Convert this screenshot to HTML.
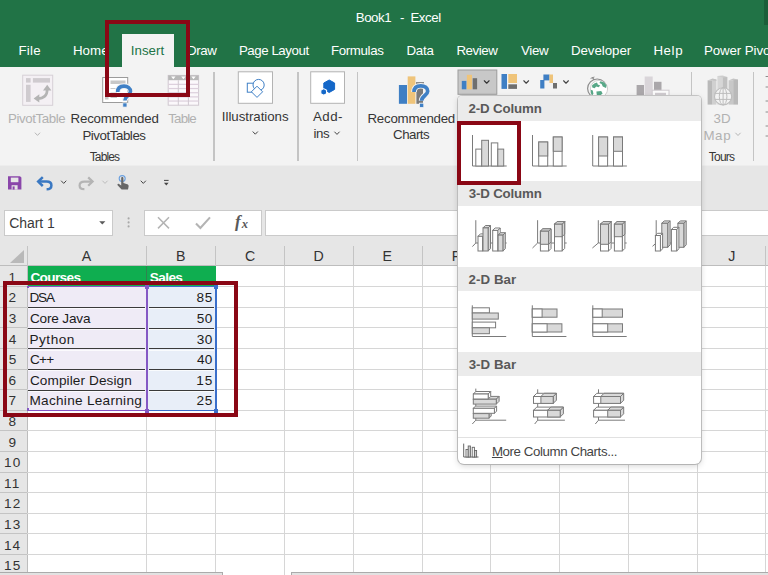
<!DOCTYPE html>
<html><head><meta charset="utf-8"><title>Book1 - Excel</title>
<style>
html,body{margin:0;padding:0;}
body{width:768px;height:575px;overflow:hidden;position:relative;background:#fff;font-family:"Liberation Sans", sans-serif;}
body div,body span.t,body svg{position:absolute;}
.t{white-space:nowrap;display:block;}
</style></head><body>
<div style="left:0px;top:0px;width:768px;height:67px;background:#217346;"></div>
<div style="left:764px;top:0px;width:4px;height:25px;background:#1b5e39;"></div>
<div style="left:0px;top:67px;width:768px;height:98.4px;background:#f3f3f3;"></div>
<div style="left:0px;top:165.4px;width:768px;height:1px;background:#ededed;"></div>
<div style="left:0px;top:166.2px;width:768px;height:78px;background:#e6e6e6;"></div>
<div style="left:122px;top:34px;width:52px;height:33px;background:#f3f3f3;"></div>
<span id="t0" class="t" style="left:355.71px;top:11.04px;font-size:13.3px;line-height:13.3px;color:#fff;font-weight:400;letter-spacing:-0.443px;">Book1</span>
<span id="t1" class="t" style="left:399.94px;top:11.04px;font-size:13.3px;line-height:13.3px;color:#fff;font-weight:400;letter-spacing:0.000px;">-</span>
<span id="t2" class="t" style="left:410.41px;top:11.04px;font-size:13.3px;line-height:13.3px;color:#fff;font-weight:400;letter-spacing:-0.435px;">Excel</span>
<span id="t3" class="t" style="left:18.41px;top:44.24px;font-size:13.3px;line-height:13.3px;color:#fff;font-weight:400;letter-spacing:0.250px;">File</span>
<span id="t4" class="t" style="left:72.91px;top:44.24px;font-size:13.3px;line-height:13.3px;color:#fff;font-weight:400;letter-spacing:0.068px;">Home</span>
<span id="t5" class="t" style="left:130.77px;top:44.24px;font-size:13.3px;line-height:13.3px;color:#217346;font-weight:400;letter-spacing:0.012px;">Insert</span>
<span id="t6" class="t" style="left:186.91px;top:44.24px;font-size:13.3px;line-height:13.3px;color:#fff;font-weight:400;letter-spacing:-0.326px;">Draw</span>
<span id="t7" class="t" style="left:238.91px;top:44.24px;font-size:13.3px;line-height:13.3px;color:#fff;font-weight:400;letter-spacing:-0.450px;">Page Layout</span>
<span id="t8" class="t" style="left:330.91px;top:44.24px;font-size:13.3px;line-height:13.3px;color:#fff;font-weight:400;letter-spacing:-0.351px;">Formulas</span>
<span id="t9" class="t" style="left:406.41px;top:44.24px;font-size:13.3px;line-height:13.3px;color:#fff;font-weight:400;letter-spacing:-0.168px;">Data</span>
<span id="t10" class="t" style="left:456.41px;top:44.24px;font-size:13.3px;line-height:13.3px;color:#fff;font-weight:400;letter-spacing:-0.410px;">Review</span>
<span id="t11" class="t" style="left:520.94px;top:44.24px;font-size:13.3px;line-height:13.3px;color:#fff;font-weight:400;letter-spacing:-0.267px;">View</span>
<span id="t12" class="t" style="left:570.91px;top:44.24px;font-size:13.3px;line-height:13.3px;color:#fff;font-weight:400;letter-spacing:-0.039px;">Developer</span>
<span id="t13" class="t" style="left:653.41px;top:44.24px;font-size:13.3px;line-height:13.3px;color:#fff;font-weight:400;letter-spacing:0.599px;">Help</span>
<span id="t14" class="t" style="left:703.91px;top:44.24px;font-size:13.3px;line-height:13.3px;color:#fff;font-weight:400;letter-spacing:-0.077px;">Power Pivot</span>
<span id="t15" class="t" style="left:7.91px;top:112.04px;font-size:13.3px;line-height:13.3px;color:#b1b1b1;font-weight:400;letter-spacing:-0.395px;">PivotTable</span>
<span id="t16" class="t" style="left:70.51px;top:112.04px;font-size:13.3px;line-height:13.3px;color:#363636;font-weight:400;letter-spacing:-0.184px;">Recommended</span>
<span id="t17" class="t" style="left:82.41px;top:128.94px;font-size:13.3px;line-height:13.3px;color:#363636;font-weight:400;letter-spacing:-0.442px;">PivotTables</span>
<span id="t18" class="t" style="left:168.30px;top:112.04px;font-size:13.3px;line-height:13.3px;color:#b1b1b1;font-weight:400;letter-spacing:-0.845px;">Table</span>
<span id="t19" class="t" style="left:89.73px;top:151.44px;font-size:12px;line-height:12px;color:#363636;font-weight:400;letter-spacing:-0.863px;">Tables</span>
<span id="t20" class="t" style="left:221.87px;top:109.54px;font-size:13.3px;line-height:13.3px;color:#363636;font-weight:400;letter-spacing:-0.047px;">Illustrations</span>
<span id="t21" class="t" style="left:313.07px;top:109.54px;font-size:13.3px;line-height:13.3px;color:#363636;font-weight:400;letter-spacing:0.408px;">Add-</span>
<span id="t22" class="t" style="left:313.61px;top:126.74px;font-size:13.3px;line-height:13.3px;color:#363636;font-weight:400;letter-spacing:-0.466px;">ins</span>
<span id="t23" class="t" style="left:367.51px;top:111.54px;font-size:13.3px;line-height:13.3px;color:#363636;font-weight:400;letter-spacing:-0.244px;">Recommended</span>
<span id="t24" class="t" style="left:393.12px;top:128.34px;font-size:13.3px;line-height:13.3px;color:#363636;font-weight:400;letter-spacing:-0.523px;">Charts</span>
<span id="t25" class="t" style="left:713.49px;top:112.04px;font-size:13.3px;line-height:13.3px;color:#b1b1b1;font-weight:400;letter-spacing:0.141px;">3D</span>
<span id="t26" class="t" style="left:703.41px;top:128.94px;font-size:13.3px;line-height:13.3px;color:#b1b1b1;font-weight:400;letter-spacing:0.638px;">Map</span>
<span id="t27" class="t" style="left:708.73px;top:151.44px;font-size:12px;line-height:12px;color:#363636;font-weight:400;letter-spacing:-0.743px;">Tours</span>
<div style="left:213.20000000000002px;top:71.5px;width:1.4px;height:89.5px;background:#c4c4c4;"></div>
<div style="left:297.2px;top:71.5px;width:1.4px;height:89.5px;background:#c4c4c4;"></div>
<div style="left:356.8px;top:71.5px;width:1.4px;height:89.5px;background:#c4c4c4;"></div>
<div style="left:691.0px;top:71.5px;width:1.4px;height:89.5px;background:#c4c4c4;"></div>
<div style="left:752.9px;top:71.5px;width:1.4px;height:89.5px;background:#c4c4c4;"></div>
<div style="left:3.5px;top:209.5px;width:109px;height:26px;background:#fff;box-sizing:border-box;border:1px solid #cacaca;"></div>
<span id="t28" class="t" style="left:9.29px;top:216.45px;font-size:14px;line-height:14px;color:#3a3a3a;font-weight:400;letter-spacing:-0.086px;">Chart 1</span>
<div style="left:144px;top:209.5px;width:118px;height:26px;background:#fff;box-sizing:border-box;border:1px solid #cacaca;"></div>
<span id="t29" class="t" style="left:235.06px;top:212.71px;font-size:17px;line-height:17px;color:#595959;font-weight:700;letter-spacing:0.000px;font-family:'Liberation Serif', serif;"><i>f</i></span>
<span id="t30" class="t" style="left:241.80px;top:217.52px;font-size:12.5px;line-height:12.5px;color:#595959;font-weight:700;letter-spacing:0.000px;font-family:'Liberation Serif', serif;"><i>x</i></span>
<div style="left:264.5px;top:209.5px;width:510px;height:26px;background:#fff;box-sizing:border-box;border:1px solid #cacaca;"></div>
<svg style="left:0;top:0" width="768" height="575" viewBox="0 0 768 575">
<rect x="22.70" y="75.20" width="30.00" height="30.10" fill="#f4f0f4" stroke="#d6d0d6" stroke-width="1" />
<rect x="26.00" y="78.10" width="4.60" height="4.50" fill="#cfcbcf"  />
<rect x="32.90" y="78.10" width="17.10" height="4.50" fill="#cfcbcf"  />
<rect x="26.00" y="84.75" width="4.60" height="17.15" fill="#cfcbcf"  />
<path d="M37.5,98.5 C44,98.5 47.2,95 47.2,89.5" fill="none" stroke="#b4b4b4" stroke-width="2.6" />
<polygon points="33.60,98.40 39.30,94.20 39.30,102.40" fill="#b4b4b4" stroke="none" stroke-linejoin="round" />
<polygon points="47.20,84.80 43.00,90.60 51.40,90.60" fill="#b4b4b4" stroke="none" stroke-linejoin="round" />
<path d="M35.20,133.00 L37.50,135.40 L39.80,133.00" fill="none" stroke="#b5b5b5" stroke-width="1" stroke-linecap="round" stroke-linejoin="round"/>
<rect x="102.70" y="77.50" width="25.00" height="25.00" fill="#fff" stroke="#9b9b9b" stroke-width="1" />
<rect x="110.50" y="80.50" width="15.00" height="3.50" fill="#c8c8c8"  />
<rect x="105.00" y="86.50" width="3.50" height="13.00" fill="#c8c8c8"  />
<line x1="110.50" y1="88.50" x2="116.00" y2="88.50" stroke="#c8c8c8" stroke-width="1" />
<line x1="110.50" y1="93.00" x2="117.00" y2="93.00" stroke="#c8c8c8" stroke-width="1" />
<line x1="110.50" y1="97.50" x2="117.00" y2="97.50" stroke="#c8c8c8" stroke-width="1" />
<path d="M117.7,92 C117.7,87.4 120.8,86.1 124,86.1 C127.8,86.1 130.5,88.2 130.5,91.4 C130.5,95 124.9,96 124.9,100.6" fill="none" stroke="#f3f3f3" stroke-width="5.8" />
<path d="M117.7,92 C117.7,87.4 120.8,86.1 124,86.1 C127.8,86.1 130.5,88.2 130.5,91.4 C130.5,95 124.9,96 124.9,100.6" fill="none" stroke="#3f80c6" stroke-width="3.6" />
<rect x="122.80" y="102.90" width="4.20" height="4.20" fill="#3f80c6" stroke="#f3f3f3" stroke-width="0.8" />
<rect x="168.20" y="75.40" width="30.40" height="29.80" fill="#fbf8fb" stroke="#d0c8d0" stroke-width="1" />
<rect x="168.20" y="75.40" width="30.40" height="4.80" fill="#b8b8b8"  />
<polygon points="171.10,76.60 175.50,76.60 173.30,79.20" fill="#fff" stroke="none" stroke-linejoin="round" />
<polygon points="181.20,76.60 185.60,76.60 183.40,79.20" fill="#fff" stroke="none" stroke-linejoin="round" />
<polygon points="191.30,76.60 195.70,76.60 193.50,79.20" fill="#fff" stroke="none" stroke-linejoin="round" />
<line x1="168.20" y1="84.37" x2="198.60" y2="84.37" stroke="#dccfdc" stroke-width="1.2" />
<line x1="168.20" y1="88.54" x2="198.60" y2="88.54" stroke="#dccfdc" stroke-width="1.2" />
<line x1="168.20" y1="92.71" x2="198.60" y2="92.71" stroke="#dccfdc" stroke-width="1.2" />
<line x1="168.20" y1="96.88" x2="198.60" y2="96.88" stroke="#dccfdc" stroke-width="1.2" />
<line x1="168.20" y1="101.05" x2="198.60" y2="101.05" stroke="#dccfdc" stroke-width="1.2" />
<line x1="178.30" y1="80.20" x2="178.30" y2="105.20" stroke="#d0c8d0" stroke-width="1" />
<line x1="188.40" y1="80.20" x2="188.40" y2="105.20" stroke="#d0c8d0" stroke-width="1" />
<rect x="238.30" y="71.80" width="34.20" height="31.50" fill="#fff" stroke="#b3b3b3" stroke-width="1" />
<rect x="247.30" y="83.20" width="9.10" height="9.00" fill="none" stroke="#3f80c6" stroke-width="1" />
<circle cx="258.6" cy="85" r="5.6" fill="#fff" stroke="#3f80c6" stroke-width="1"/>
<polygon points="257.00,86.20 262.60,91.80 257.00,97.40 251.40,91.80" fill="#fff" stroke="#3f80c6" stroke-width="1" stroke-linejoin="round" />
<path d="M253.00,131.80 L255.30,134.20 L257.60,131.80" fill="none" stroke="#444" stroke-width="1" stroke-linecap="round" stroke-linejoin="round"/>
<rect x="310.70" y="71.80" width="33.80" height="31.50" fill="#fff" stroke="#b3b3b3" stroke-width="1" />
<polygon points="329.20,80.00 334.60,83.00 334.60,89.40 329.20,92.50 323.80,89.40 323.80,83.00" fill="#1467c8" stroke="#1467c8" stroke-width="1" stroke-linejoin="round" />
<polygon points="323.70,88.60 326.60,90.30 326.60,93.60 323.70,95.30 320.80,93.60 320.80,90.30" fill="#1467c8" stroke="#fff" stroke-width="1.1" stroke-linejoin="round" />
<path d="M334.70,132.00 L337.00,134.40 L339.30,132.00" fill="none" stroke="#444" stroke-width="1" stroke-linecap="round" stroke-linejoin="round"/>
<rect x="398.90" y="85.00" width="8.10" height="18.80" fill="#3f7fc4"  />
<rect x="407.70" y="76.40" width="7.70" height="27.40" fill="#efc47a"  />
<rect x="416.00" y="82.00" width="8.00" height="2.00" fill="#8a8a8a"  />
<rect x="416.40" y="86.00" width="6.60" height="17.80" fill="#7a7a7a"  />
<path d="M414,92 C414,87.2 417.4,85.8 420.8,85.8 C424.8,85.8 427.7,88 427.7,91.3 C427.7,95.2 421.6,96 421.6,100.8" fill="none" stroke="#f3f3f3" stroke-width="5.6" />
<path d="M414,92 C414,87.2 417.4,85.8 420.8,85.8 C424.8,85.8 427.7,88 427.7,91.3 C427.7,95.2 421.6,96 421.6,100.8" fill="none" stroke="#3f80c6" stroke-width="3.7" />
<rect x="419.50" y="103.20" width="4.30" height="4.30" fill="#3f80c6" stroke="#f3f3f3" stroke-width="0.8" />
<rect x="458.00" y="70.00" width="38.80" height="24.30" fill="#c8c8c8" stroke="#9c9c9c" stroke-width="1" />
<rect x="461.80" y="80.90" width="4.60" height="8.40" fill="#3f7fc4"  />
<rect x="466.90" y="74.80" width="5.10" height="14.50" fill="#efc47a"  />
<rect x="472.70" y="78.20" width="4.40" height="11.10" fill="#6f6f6f"  />
<path d="M484.30,80.75 L486.70,83.25 L489.10,80.75" fill="none" stroke="#333" stroke-width="1.1" stroke-linecap="round" stroke-linejoin="round"/>
<rect x="501.50" y="74.00" width="5.50" height="14.90" fill="#3f7fc4"  />
<rect x="508.30" y="74.00" width="8.70" height="9.00" fill="#efc47a"  />
<rect x="508.30" y="84.30" width="8.70" height="4.60" fill="#6f6f6f"  />
<path d="M523.80,80.75 L526.20,83.25 L528.60,80.75" fill="none" stroke="#444" stroke-width="1.1" stroke-linecap="round" stroke-linejoin="round"/>
<rect x="540.20" y="80.00" width="4.20" height="8.50" fill="#3f7fc4"  />
<rect x="543.40" y="74.50" width="6.10" height="5.90" fill="#3f7fc4"  />
<rect x="549.50" y="74.50" width="3.50" height="8.50" fill="#efc47a"  />
<rect x="553.00" y="83.00" width="4.00" height="5.50" fill="#6f6f6f"  />
<path d="M563.60,80.75 L566.00,83.25 L568.40,80.75" fill="none" stroke="#444" stroke-width="1.1" stroke-linecap="round" stroke-linejoin="round"/>
<circle cx="597.2" cy="88.6" r="9.6" fill="none" stroke="#8c8c8c" stroke-width="1.2"/>
<circle cx="599" cy="89" r="8.6" fill="#fff" stroke="#b9b9b9" stroke-width=".6"/>
<path d="M594.3,83.6 L597,82.4 L597.8,84.6 L600.2,85.6 L598.6,87.2 L596.2,86.6 L594.6,88.2 L592.3,87.4 L592,85.4 Z" fill="#58a888"  />
<path d="M600.4,81.2 L604.4,82.4 L606.6,85.4 L606,88 L602.8,86.6 L601.6,84 L599.4,83 Z" fill="#58a888"  />
<path d="M590.8,89.8 L592.8,90.6 L593.4,93.8 L592,95.4 L590.9,93 Z" fill="#58a888"  />
<path d="M596.4,91.6 L601.2,91 L602.6,93.4 L600.2,95.6 L596.8,95 Z" fill="#58a888"  />
<line x1="592.20" y1="77.40" x2="594.40" y2="80.00" stroke="#8c8c8c" stroke-width="1.2" />
<line x1="590.60" y1="78.40" x2="594.40" y2="77.00" stroke="#8c8c8c" stroke-width="1" />
<rect x="636.60" y="85.00" width="7.40" height="11.00" fill="#aaa7aa"  />
<rect x="644.70" y="76.50" width="8.00" height="19.50" fill="#d9d5d9"  />
<rect x="654.00" y="81.80" width="7.50" height="14.20" fill="#aaa7aa"  />
<rect x="652.20" y="90.20" width="16.80" height="6.80" fill="#fbfbfb" stroke="#cfcbcf" stroke-width="1" />
<rect x="655.00" y="92.80" width="11.00" height="3.20" fill="#cfcbcf"  />
<rect x="707.60" y="80.40" width="5.00" height="24.20" fill="#b9b9b9"  />
<rect x="712.60" y="79.40" width="3.80" height="25.20" fill="#d0d0d0"  />
<rect x="717.40" y="76.00" width="5.20" height="28.60" fill="#d6d6d6"  />
<rect x="722.60" y="77.00" width="4.80" height="27.60" fill="#c0c0c0"  />
<rect x="728.60" y="80.40" width="4.60" height="24.20" fill="#c8c8c8"  />
<rect x="733.20" y="79.40" width="4.80" height="25.20" fill="#b9b9b9"  />
<polygon points="707.60,80.40 712.60,78.40 716.40,79.40 716.40,81.00 712.60,80.40" fill="#c4c4c4" stroke="none" stroke-linejoin="round" />
<polygon points="717.40,76.00 722.60,75.60 727.40,77.00 722.60,77.60" fill="#cdcdcd" stroke="none" stroke-linejoin="round" />
<polygon points="728.60,80.40 733.20,78.40 738.00,79.40 733.20,80.60" fill="#c4c4c4" stroke="none" stroke-linejoin="round" />
<circle cx="723.1" cy="96.4" r="8.6" fill="#f3f3f3" stroke="#bdbdbd" stroke-width="1.1"/>
<ellipse cx="723.1" cy="96.4" rx="3.8" ry="8.6" fill="none" stroke="#bdbdbd" stroke-width="1"/>
<line x1="714.80" y1="93.40" x2="731.40" y2="93.40" stroke="#bdbdbd" stroke-width="1" />
<line x1="714.80" y1="99.40" x2="731.40" y2="99.40" stroke="#bdbdbd" stroke-width="1" />
<line x1="723.10" y1="87.80" x2="723.10" y2="105.00" stroke="#bdbdbd" stroke-width="1" />
<path d="M735.70,133.10 L738.00,135.50 L740.30,133.10" fill="none" stroke="#b5b5b5" stroke-width="1" stroke-linecap="round" stroke-linejoin="round"/>
<line x1="765.60" y1="76.50" x2="768.00" y2="76.50" stroke="#8c8c8c" stroke-width="1" />
<line x1="765.60" y1="87.00" x2="768.00" y2="87.00" stroke="#8c8c8c" stroke-width="1" />
<line x1="765.60" y1="101.00" x2="768.00" y2="101.00" stroke="#8c8c8c" stroke-width="1" />
<line x1="765.60" y1="112.00" x2="768.00" y2="112.00" stroke="#8c8c8c" stroke-width="1" />
<line x1="765.60" y1="126.00" x2="768.00" y2="126.00" stroke="#8c8c8c" stroke-width="1" />
<line x1="765.60" y1="136.00" x2="768.00" y2="136.00" stroke="#8c8c8c" stroke-width="1" />
<path d="M8,176.2 H20 L21.4,177.6 V189.6 H8 Z" fill="#8a46aa"  />
<rect x="10.80" y="177.60" width="7.60" height="4.60" fill="#e6e6e6"  />
<rect x="11.60" y="185.20" width="6.00" height="4.40" fill="#e6e6e6"  />
<rect x="12.60" y="186.40" width="2.00" height="3.20" fill="#8a46aa"  />
<path d="M40,181.6 H46.6 C50,181.6 51.4,183.6 51.4,185.4 C51.4,187.6 49.8,189.2 46.6,189.2" fill="none" stroke="#3a78c2" stroke-width="2.5" stroke-linecap="butt"/>
<path d="M42.8,177.2 L38.2,181.6 L42.8,186" fill="none" stroke="#3a78c2" stroke-width="2.5" stroke-linejoin="miter"/>
<path d="M61.40,181.00 L63.70,183.40 L66.00,181.00" fill="none" stroke="#444" stroke-width="1" stroke-linecap="round" stroke-linejoin="round"/>
<path d="M91,181.6 H84.4 C81,181.6 79.6,183.6 79.6,185.4 C79.6,187.6 81.2,189.2 84.4,189.2" fill="none" stroke="#b4b4b4" stroke-width="2.2" />
<path d="M88.2,177.4 L92.6,181.6 L88.2,185.8" fill="none" stroke="#b4b4b4" stroke-width="2.2" />
<path d="M102.70,181.00 L105.00,183.40 L107.30,181.00" fill="none" stroke="#bdbdbd" stroke-width="1" stroke-linecap="round" stroke-linejoin="round"/>
<circle cx="122.2" cy="178.6" r="3" fill="none" stroke="#6aa0e0" stroke-width="1.1"/>
<path d="M121.2,178 C121.2,176.8 123.4,176.8 123.4,178 V183 L127.2,184.2 C128.4,184.6 128.8,185.4 128.6,186.6 L128,189.6 H121.6 L117.6,185.2 C117,184.4 118,183.4 119,184 L121.2,185.6 Z" fill="#666"  />
<path d="M141.00,181.00 L143.30,183.40 L145.60,181.00" fill="none" stroke="#444" stroke-width="1" stroke-linecap="round" stroke-linejoin="round"/>
<line x1="164.00" y1="180.40" x2="168.60" y2="180.40" stroke="#444" stroke-width="1" />
<polygon points="164.00,182.80 168.60,182.80 166.30,185.40" fill="#444" stroke="none" stroke-linejoin="round" />
<polygon points="99.20,221.20 105.40,221.20 102.30,224.60" fill="#5a5a5a" stroke="none" stroke-linejoin="round" />
<circle cx="128.6" cy="218.4" r="1.05" fill="#a8a8a8"/>
<circle cx="128.6" cy="222.4" r="1.05" fill="#a8a8a8"/>
<circle cx="128.6" cy="226.4" r="1.05" fill="#a8a8a8"/>
<path d="M158,217.2 L169,228.4 M169,217.2 L158,228.4" fill="none" stroke="#b4b4b4" stroke-width="1.5" />
<path d="M196,223.6 L200.4,228 L210,217.4" fill="none" stroke="#b4b4b4" stroke-width="2.1" />
</svg>
<div style="left:0px;top:266px;width:768px;height:309px;background:#fff;"></div>
<div style="left:0px;top:244px;width:768px;height:22px;background:#e6e6e6;"></div>
<div style="left:0px;top:265px;width:768px;height:1px;background:#bdbdbd;"></div>
<div style="left:26.5px;top:245.5px;width:1px;height:20.5px;background:#c4c4c4;"></div>
<div style="left:26.5px;top:266px;width:1px;height:309px;background:#d6d6d6;"></div>
<div style="left:145.5px;top:245.5px;width:1px;height:20.5px;background:#c4c4c4;"></div>
<div style="left:145.5px;top:266px;width:1px;height:309px;background:#d6d6d6;"></div>
<div style="left:215.25px;top:245.5px;width:1px;height:20.5px;background:#c4c4c4;"></div>
<div style="left:215.25px;top:266px;width:1px;height:309px;background:#d6d6d6;"></div>
<div style="left:284.0px;top:245.5px;width:1px;height:20.5px;background:#c4c4c4;"></div>
<div style="left:284.0px;top:266px;width:1px;height:309px;background:#d6d6d6;"></div>
<div style="left:352.75px;top:245.5px;width:1px;height:20.5px;background:#c4c4c4;"></div>
<div style="left:352.75px;top:266px;width:1px;height:309px;background:#d6d6d6;"></div>
<div style="left:421.5px;top:245.5px;width:1px;height:20.5px;background:#c4c4c4;"></div>
<div style="left:421.5px;top:266px;width:1px;height:309px;background:#d6d6d6;"></div>
<div style="left:490.25px;top:245.5px;width:1px;height:20.5px;background:#c4c4c4;"></div>
<div style="left:490.25px;top:266px;width:1px;height:309px;background:#d6d6d6;"></div>
<div style="left:559.0px;top:245.5px;width:1px;height:20.5px;background:#c4c4c4;"></div>
<div style="left:559.0px;top:266px;width:1px;height:309px;background:#d6d6d6;"></div>
<div style="left:627.75px;top:245.5px;width:1px;height:20.5px;background:#c4c4c4;"></div>
<div style="left:627.75px;top:266px;width:1px;height:309px;background:#d6d6d6;"></div>
<div style="left:696.5px;top:245.5px;width:1px;height:20.5px;background:#c4c4c4;"></div>
<div style="left:696.5px;top:266px;width:1px;height:309px;background:#d6d6d6;"></div>
<div style="left:765.25px;top:245.5px;width:1px;height:20.5px;background:#c4c4c4;"></div>
<div style="left:765.25px;top:266px;width:1px;height:309px;background:#d6d6d6;"></div>
<div style="left:0px;top:266px;width:27px;height:309px;background:#e6e6e6;"></div>
<div style="left:26.5px;top:266px;width:1px;height:309px;background:#bdbdbd;"></div>
<div style="left:27px;top:286.1px;width:741px;height:1px;background:#d6d6d6;"></div>
<div style="left:0px;top:286.1px;width:27px;height:1px;background:#c4c4c4;"></div>
<div style="left:27px;top:306.7px;width:741px;height:1px;background:#d6d6d6;"></div>
<div style="left:0px;top:306.7px;width:27px;height:1px;background:#c4c4c4;"></div>
<div style="left:27px;top:327.3px;width:741px;height:1px;background:#d6d6d6;"></div>
<div style="left:0px;top:327.3px;width:27px;height:1px;background:#c4c4c4;"></div>
<div style="left:27px;top:347.9px;width:741px;height:1px;background:#d6d6d6;"></div>
<div style="left:0px;top:347.9px;width:27px;height:1px;background:#c4c4c4;"></div>
<div style="left:27px;top:368.5px;width:741px;height:1px;background:#d6d6d6;"></div>
<div style="left:0px;top:368.5px;width:27px;height:1px;background:#c4c4c4;"></div>
<div style="left:27px;top:389.1px;width:741px;height:1px;background:#d6d6d6;"></div>
<div style="left:0px;top:389.1px;width:27px;height:1px;background:#c4c4c4;"></div>
<div style="left:27px;top:409.70000000000005px;width:741px;height:1px;background:#d6d6d6;"></div>
<div style="left:0px;top:409.70000000000005px;width:27px;height:1px;background:#c4c4c4;"></div>
<div style="left:27px;top:430.3px;width:741px;height:1px;background:#d6d6d6;"></div>
<div style="left:0px;top:430.3px;width:27px;height:1px;background:#c4c4c4;"></div>
<div style="left:27px;top:450.9px;width:741px;height:1px;background:#d6d6d6;"></div>
<div style="left:0px;top:450.9px;width:27px;height:1px;background:#c4c4c4;"></div>
<div style="left:27px;top:471.5px;width:741px;height:1px;background:#d6d6d6;"></div>
<div style="left:0px;top:471.5px;width:27px;height:1px;background:#c4c4c4;"></div>
<div style="left:27px;top:492.1px;width:741px;height:1px;background:#d6d6d6;"></div>
<div style="left:0px;top:492.1px;width:27px;height:1px;background:#c4c4c4;"></div>
<div style="left:27px;top:512.7px;width:741px;height:1px;background:#d6d6d6;"></div>
<div style="left:0px;top:512.7px;width:27px;height:1px;background:#c4c4c4;"></div>
<div style="left:27px;top:533.3px;width:741px;height:1px;background:#d6d6d6;"></div>
<div style="left:0px;top:533.3px;width:27px;height:1px;background:#c4c4c4;"></div>
<div style="left:27px;top:553.9000000000001px;width:741px;height:1px;background:#d6d6d6;"></div>
<div style="left:0px;top:553.9000000000001px;width:27px;height:1px;background:#c4c4c4;"></div>
<div style="left:27px;top:574.5px;width:741px;height:1px;background:#d6d6d6;"></div>
<div style="left:0px;top:574.5px;width:27px;height:1px;background:#c4c4c4;"></div>
<svg style="left:9px;top:249px" width="16" height="15" viewBox="0 0 16 15"><polygon points="15,1 15,14 1,14" fill="#b9b9b9"/></svg>
<span id="t31" class="t" style="left:81.76px;top:249.18px;font-size:14.2px;line-height:14.2px;color:#333;font-weight:400;letter-spacing:0.000px;">A</span>
<span id="t32" class="t" style="left:175.93px;top:249.18px;font-size:14.2px;line-height:14.2px;color:#333;font-weight:400;letter-spacing:0.000px;">B</span>
<span id="t33" class="t" style="left:244.91px;top:249.18px;font-size:14.2px;line-height:14.2px;color:#333;font-weight:400;letter-spacing:0.000px;">C</span>
<span id="t34" class="t" style="left:313.50px;top:249.18px;font-size:14.2px;line-height:14.2px;color:#333;font-weight:400;letter-spacing:0.000px;">D</span>
<span id="t35" class="t" style="left:382.61px;top:249.18px;font-size:14.2px;line-height:14.2px;color:#333;font-weight:400;letter-spacing:0.000px;">E</span>
<span id="t36" class="t" style="left:451.74px;top:249.18px;font-size:14.2px;line-height:14.2px;color:#333;font-weight:400;letter-spacing:0.000px;">F</span>
<span id="t37" class="t" style="left:519.78px;top:249.18px;font-size:14.2px;line-height:14.2px;color:#333;font-weight:400;letter-spacing:0.000px;">G</span>
<span id="t38" class="t" style="left:588.74px;top:249.18px;font-size:14.2px;line-height:14.2px;color:#333;font-weight:400;letter-spacing:0.000px;">H</span>
<span id="t39" class="t" style="left:660.65px;top:249.18px;font-size:14.2px;line-height:14.2px;color:#333;font-weight:400;letter-spacing:0.000px;">I</span>
<span id="t40" class="t" style="left:728.24px;top:249.18px;font-size:14.2px;line-height:14.2px;color:#333;font-weight:400;letter-spacing:0.000px;">J</span>
<span id="t41" class="t" style="left:8.43px;top:270.79px;font-size:13.6px;line-height:13.6px;color:#333;font-weight:400;letter-spacing:0.000px;">1</span>
<span id="t42" class="t" style="left:8.62px;top:291.39px;font-size:13.6px;line-height:13.6px;color:#333;font-weight:400;letter-spacing:0.000px;">2</span>
<span id="t43" class="t" style="left:8.66px;top:311.99px;font-size:13.6px;line-height:13.6px;color:#333;font-weight:400;letter-spacing:0.000px;">3</span>
<span id="t44" class="t" style="left:8.66px;top:332.59px;font-size:13.6px;line-height:13.6px;color:#333;font-weight:400;letter-spacing:0.000px;">4</span>
<span id="t45" class="t" style="left:8.63px;top:353.19px;font-size:13.6px;line-height:13.6px;color:#333;font-weight:400;letter-spacing:0.000px;">5</span>
<span id="t46" class="t" style="left:8.57px;top:373.79px;font-size:13.6px;line-height:13.6px;color:#333;font-weight:400;letter-spacing:0.000px;">6</span>
<span id="t47" class="t" style="left:8.61px;top:394.39px;font-size:13.6px;line-height:13.6px;color:#333;font-weight:400;letter-spacing:0.000px;">7</span>
<span id="t48" class="t" style="left:8.62px;top:414.99px;font-size:13.6px;line-height:13.6px;color:#333;font-weight:400;letter-spacing:0.000px;">8</span>
<span id="t49" class="t" style="left:8.62px;top:435.59px;font-size:13.6px;line-height:13.6px;color:#333;font-weight:400;letter-spacing:0.000px;">9</span>
<span id="t50" class="t" style="left:4.06px;top:456.19px;font-size:13.6px;line-height:13.6px;color:#333;font-weight:400;letter-spacing:1.040px;">10</span>
<span id="t51" class="t" style="left:4.06px;top:476.79px;font-size:13.6px;line-height:13.6px;color:#333;font-weight:400;letter-spacing:1.173px;">11</span>
<span id="t52" class="t" style="left:4.06px;top:497.39px;font-size:13.6px;line-height:13.6px;color:#333;font-weight:400;letter-spacing:1.193px;">12</span>
<span id="t53" class="t" style="left:4.06px;top:517.99px;font-size:13.6px;line-height:13.6px;color:#333;font-weight:400;letter-spacing:1.106px;">13</span>
<span id="t54" class="t" style="left:4.06px;top:538.59px;font-size:13.6px;line-height:13.6px;color:#333;font-weight:400;letter-spacing:0.907px;">14</span>
<span id="t55" class="t" style="left:4.06px;top:559.19px;font-size:13.6px;line-height:13.6px;color:#333;font-weight:400;letter-spacing:1.080px;">15</span>
<div style="left:27.5px;top:266px;width:188px;height:20.4px;background:#0fae50;"></div>
<div style="left:145.8px;top:266px;width:1px;height:20.4px;background:#2f8450;"></div>
<span id="t56" class="t" style="left:30.44px;top:270.59px;font-size:13.6px;line-height:13.6px;color:#fff;font-weight:700;letter-spacing:-0.634px;">Courses</span>
<span id="t57" class="t" style="left:149.81px;top:270.59px;font-size:13.6px;line-height:13.6px;color:#fff;font-weight:700;letter-spacing:-0.598px;">Sales</span>
<div style="left:27.5px;top:286.6px;width:118.5px;height:123.60000000000001px;background:#efebf6;"></div>
<div style="left:146px;top:286.6px;width:69.5px;height:123.60000000000001px;background:#e8eef8;"></div>
<div style="left:28px;top:307.09999999999997px;width:117.2px;height:1.2px;background:#3a3a3a;"></div>
<div style="left:148.6px;top:307.09999999999997px;width:65.4px;height:1.2px;background:#3a3a3a;"></div>
<div style="left:28px;top:308.3px;width:117.2px;height:0.8px;background:rgba(255,255,255,.75);"></div>
<div style="left:148.6px;top:308.3px;width:65.4px;height:0.8px;background:rgba(255,255,255,.75);"></div>
<div style="left:28px;top:327.7px;width:117.2px;height:1.2px;background:#3a3a3a;"></div>
<div style="left:148.6px;top:327.7px;width:65.4px;height:1.2px;background:#3a3a3a;"></div>
<div style="left:28px;top:328.90000000000003px;width:117.2px;height:0.8px;background:rgba(255,255,255,.75);"></div>
<div style="left:148.6px;top:328.90000000000003px;width:65.4px;height:0.8px;background:rgba(255,255,255,.75);"></div>
<div style="left:28px;top:348.29999999999995px;width:117.2px;height:1.2px;background:#3a3a3a;"></div>
<div style="left:148.6px;top:348.29999999999995px;width:65.4px;height:1.2px;background:#3a3a3a;"></div>
<div style="left:28px;top:349.5px;width:117.2px;height:0.8px;background:rgba(255,255,255,.75);"></div>
<div style="left:148.6px;top:349.5px;width:65.4px;height:0.8px;background:rgba(255,255,255,.75);"></div>
<div style="left:28px;top:368.9px;width:117.2px;height:1.2px;background:#3a3a3a;"></div>
<div style="left:148.6px;top:368.9px;width:65.4px;height:1.2px;background:#3a3a3a;"></div>
<div style="left:28px;top:370.1px;width:117.2px;height:0.8px;background:rgba(255,255,255,.75);"></div>
<div style="left:148.6px;top:370.1px;width:65.4px;height:0.8px;background:rgba(255,255,255,.75);"></div>
<div style="left:28px;top:389.5px;width:117.2px;height:1.2px;background:#3a3a3a;"></div>
<div style="left:148.6px;top:389.5px;width:65.4px;height:1.2px;background:#3a3a3a;"></div>
<div style="left:28px;top:390.70000000000005px;width:117.2px;height:0.8px;background:rgba(255,255,255,.75);"></div>
<div style="left:148.6px;top:390.70000000000005px;width:65.4px;height:0.8px;background:rgba(255,255,255,.75);"></div>
<span id="t58" class="t" style="left:29.48px;top:291.39px;font-size:13.6px;line-height:13.6px;color:#1c1c1c;font-weight:400;letter-spacing:-1.211px;">DSA</span>
<span id="t59" class="t" style="left:196.61px;top:291.39px;font-size:13.6px;line-height:13.6px;color:#1c1c1c;font-weight:400;letter-spacing:0.635px;">85</span>
<span id="t60" class="t" style="left:29.91px;top:311.99px;font-size:13.6px;line-height:13.6px;color:#1c1c1c;font-weight:400;letter-spacing:-0.174px;">Core Java</span>
<span id="t61" class="t" style="left:196.66px;top:311.99px;font-size:13.6px;line-height:13.6px;color:#1c1c1c;font-weight:400;letter-spacing:0.548px;">50</span>
<span id="t62" class="t" style="left:29.48px;top:332.59px;font-size:13.6px;line-height:13.6px;color:#1c1c1c;font-weight:400;letter-spacing:0.512px;">Python</span>
<span id="t63" class="t" style="left:196.68px;top:332.59px;font-size:13.6px;line-height:13.6px;color:#1c1c1c;font-weight:400;letter-spacing:0.522px;">30</span>
<span id="t64" class="t" style="left:29.91px;top:353.19px;font-size:13.6px;line-height:13.6px;color:#1c1c1c;font-weight:400;letter-spacing:-0.722px;">C++</span>
<span id="t65" class="t" style="left:196.89px;top:353.19px;font-size:13.6px;line-height:13.6px;color:#1c1c1c;font-weight:400;letter-spacing:0.316px;">40</span>
<span id="t66" class="t" style="left:29.91px;top:373.79px;font-size:13.6px;line-height:13.6px;color:#1c1c1c;font-weight:400;letter-spacing:0.103px;">Compiler Design</span>
<span id="t67" class="t" style="left:196.16px;top:373.79px;font-size:13.6px;line-height:13.6px;color:#1c1c1c;font-weight:400;letter-spacing:1.080px;">15</span>
<span id="t68" class="t" style="left:29.48px;top:394.39px;font-size:13.6px;line-height:13.6px;color:#1c1c1c;font-weight:400;letter-spacing:0.285px;">Machine Learning</span>
<span id="t69" class="t" style="left:196.52px;top:394.39px;font-size:13.6px;line-height:13.6px;color:#1c1c1c;font-weight:400;letter-spacing:0.728px;">25</span>
<div style="left:28.6px;top:285.8px;width:119.4px;height:1.7px;background:#8558c4;"></div>
<div style="left:27.6px;top:409.80000000000007px;width:120.4px;height:1.7px;background:#8558c4;"></div>
<div style="left:27.4px;top:407.90000000000003px;width:1.6px;height:3.6px;background:#8558c4;"></div>
<div style="left:27.4px;top:285.8px;width:1.6px;height:2.6px;background:#8558c4;"></div>
<div style="left:145.9px;top:285.8px;width:2.1px;height:125.70000000000005px;background:#8558c4;"></div>
<div style="left:148.6px;top:285.8px;width:68.2px;height:1.7px;background:#3a6fcb;"></div>
<div style="left:148.6px;top:409.80000000000007px;width:68.2px;height:1.7px;background:#3a6fcb;"></div>
<div style="left:214.7px;top:285.8px;width:2.1px;height:125.70000000000005px;background:#3a6fcb;"></div>
<div style="left:144.9px;top:284.9px;width:4.2px;height:3.8px;background:#8558c4;"></div>
<div style="left:144.9px;top:408.80000000000007px;width:4.2px;height:3.8px;background:#8558c4;"></div>
<div style="left:213.70000000000002px;top:284.9px;width:4.2px;height:3.8px;background:#3a6fcb;"></div>
<div style="left:213.70000000000002px;top:408.80000000000007px;width:4.2px;height:3.8px;background:#3a6fcb;"></div>
<div style="left:0px;top:572.4px;width:223px;height:2.6px;background:#e2e2e2;"></div>
<div style="left:0px;top:572.4px;width:223px;height:1px;background:#ababab;"></div>
<div style="left:290.6px;top:572.4px;width:478px;height:2.6px;background:#e2e2e2;"></div>
<div style="left:290.6px;top:572.4px;width:478px;height:1px;background:#ababab;"></div>
<div style="left:222.4px;top:572.4px;width:1px;height:2.6px;background:#ababab;"></div>
<div style="left:290.6px;top:572.4px;width:1px;height:2.6px;background:#ababab;"></div>
<div style="left:458.4px;top:95.8px;width:242.2px;height:368.4px;background:#fff;border-radius:4px 4px 6px 6px;box-shadow:0 2px 6px rgba(0,0,0,.17),0 0 0 1px #cbcbcb;overflow:hidden"><div style="left:0;top:0;width:243px;height:25px;background:#ebebeb"></div><div style="left:0;top:85.5px;width:243px;height:24.7px;background:#ebebeb"></div><div style="left:0;top:170.8px;width:243px;height:24.7px;background:#ebebeb"></div><div style="left:0;top:256px;width:243px;height:24.7px;background:#ebebeb"></div><div style="left:0;top:341.5px;width:243px;height:1px;background:#e1e1e1"></div></div>
<svg style="left:0;top:0" width="768" height="575" viewBox="0 0 768 575">
<path d="M472.50,135.00 L472.50,166.00 L506.70,166.00" fill="none" stroke="#7a7a7a" stroke-width="1" />
<rect x="475.80" y="149.10" width="5.90" height="16.90" fill="#fff" stroke="#7a7a7a" stroke-width="1" />
<rect x="481.70" y="140.30" width="6.80" height="25.70" fill="#d9d9d9" stroke="#7a7a7a" stroke-width="1" />
<rect x="491.30" y="142.90" width="6.50" height="23.10" fill="#fff" stroke="#7a7a7a" stroke-width="1" />
<rect x="497.80" y="149.10" width="5.90" height="16.90" fill="#d9d9d9" stroke="#7a7a7a" stroke-width="1" />
<path d="M532.50,135.00 L532.50,166.00 L566.70,166.00" fill="none" stroke="#7a7a7a" stroke-width="1" />
<path d="M592.70,135.00 L592.70,166.00 L626.90,166.00" fill="none" stroke="#7a7a7a" stroke-width="1" />
<rect x="538.70" y="142.00" width="9.00" height="24.00" fill="#fff" stroke="#7a7a7a" stroke-width="1" />
<rect x="538.70" y="142.00" width="9.00" height="14.00" fill="#d9d9d9" stroke="#7a7a7a" stroke-width="1" />
<rect x="553.30" y="137.00" width="8.80" height="29.00" fill="#fff" stroke="#7a7a7a" stroke-width="1" />
<rect x="553.30" y="137.00" width="8.80" height="14.30" fill="#d9d9d9" stroke="#7a7a7a" stroke-width="1" />
<rect x="598.60" y="137.00" width="9.00" height="29.00" fill="#fff" stroke="#7a7a7a" stroke-width="1" />
<rect x="598.60" y="137.00" width="9.00" height="19.00" fill="#d9d9d9" stroke="#7a7a7a" stroke-width="1" />
<rect x="613.50" y="137.00" width="9.00" height="29.00" fill="#fff" stroke="#7a7a7a" stroke-width="1" />
<rect x="613.50" y="137.00" width="9.00" height="14.30" fill="#d9d9d9" stroke="#7a7a7a" stroke-width="1" />
<line x1="475.80" y1="220.20" x2="475.80" y2="243.00" stroke="#7a7a7a" stroke-width="1" />
<line x1="475.80" y1="243.00" x2="472.40" y2="246.60" stroke="#7a7a7a" stroke-width="1" />
<line x1="475.80" y1="243.00" x2="506.70" y2="243.00" stroke="#7a7a7a" stroke-width="1" />
<polygon points="482.60,236.30 485.00,233.90 485.00,248.60 482.60,251.00" fill="#fff" stroke="#7a7a7a" stroke-width="1" stroke-linejoin="round" />
<polygon points="478.00,236.30 480.40,233.90 485.00,233.90 482.60,236.30" fill="#fff" stroke="#7a7a7a" stroke-width="1" stroke-linejoin="round" />
<rect x="478.00" y="236.30" width="4.60" height="14.70" fill="#fff" stroke="#7a7a7a" stroke-width="1" />
<polygon points="488.10,227.90 490.50,225.50 490.50,248.60 488.10,251.00" fill="#d9d9d9" stroke="#7a7a7a" stroke-width="1" stroke-linejoin="round" />
<polygon points="483.00,227.90 485.40,225.50 490.50,225.50 488.10,227.90" fill="#d9d9d9" stroke="#7a7a7a" stroke-width="1" stroke-linejoin="round" />
<rect x="483.00" y="227.90" width="5.10" height="23.10" fill="#d9d9d9" stroke="#7a7a7a" stroke-width="1" />
<polygon points="497.80,230.40 500.20,228.00 500.20,248.60 497.80,251.00" fill="#fff" stroke="#7a7a7a" stroke-width="1" stroke-linejoin="round" />
<polygon points="492.70,230.40 495.10,228.00 500.20,228.00 497.80,230.40" fill="#fff" stroke="#7a7a7a" stroke-width="1" stroke-linejoin="round" />
<rect x="492.70" y="230.40" width="5.10" height="20.60" fill="#fff" stroke="#7a7a7a" stroke-width="1" />
<polygon points="502.90,235.10 505.30,232.70 505.30,248.60 502.90,251.00" fill="#d9d9d9" stroke="#7a7a7a" stroke-width="1" stroke-linejoin="round" />
<polygon points="498.10,235.10 500.50,232.70 505.30,232.70 502.90,235.10" fill="#d9d9d9" stroke="#7a7a7a" stroke-width="1" stroke-linejoin="round" />
<rect x="498.10" y="235.10" width="4.80" height="15.90" fill="#d9d9d9" stroke="#7a7a7a" stroke-width="1" />
<line x1="537.60" y1="220.20" x2="537.60" y2="243.00" stroke="#7a7a7a" stroke-width="1" />
<line x1="537.60" y1="243.00" x2="532.50" y2="248.00" stroke="#7a7a7a" stroke-width="1" />
<line x1="537.60" y1="243.00" x2="566.70" y2="243.00" stroke="#7a7a7a" stroke-width="1" />
<polygon points="548.60,231.20 551.00,228.80 551.00,248.60 548.60,251.00" fill="#fff" stroke="#7a7a7a" stroke-width="1" stroke-linejoin="round" />
<polygon points="540.40,231.20 542.80,228.80 551.00,228.80 548.60,231.20" fill="#fff" stroke="#7a7a7a" stroke-width="1" stroke-linejoin="round" />
<rect x="540.40" y="231.20" width="8.20" height="19.80" fill="#fff" stroke="#7a7a7a" stroke-width="1" />
<polygon points="548.60,231.20 551.00,228.80 551.00,241.90 548.60,244.30" fill="#d9d9d9" stroke="#7a7a7a" stroke-width="1" stroke-linejoin="round" />
<polygon points="540.40,231.20 542.80,228.80 551.00,228.80 548.60,231.20" fill="#d9d9d9" stroke="#7a7a7a" stroke-width="1" stroke-linejoin="round" />
<rect x="540.40" y="231.20" width="8.20" height="13.10" fill="#d9d9d9" stroke="#7a7a7a" stroke-width="1" />
<polygon points="562.10,224.20 564.70,221.60 564.70,248.40 562.10,251.00" fill="#fff" stroke="#7a7a7a" stroke-width="1" stroke-linejoin="round" />
<polygon points="554.50,224.20 557.10,221.60 564.70,221.60 562.10,224.20" fill="#fff" stroke="#7a7a7a" stroke-width="1" stroke-linejoin="round" />
<rect x="554.50" y="224.20" width="7.60" height="26.80" fill="#fff" stroke="#7a7a7a" stroke-width="1" />
<polygon points="562.10,224.20 564.70,221.60 564.70,234.10 562.10,236.70" fill="#d9d9d9" stroke="#7a7a7a" stroke-width="1" stroke-linejoin="round" />
<polygon points="554.50,224.20 557.10,221.60 564.70,221.60 562.10,224.20" fill="#d9d9d9" stroke="#7a7a7a" stroke-width="1" stroke-linejoin="round" />
<rect x="554.50" y="224.20" width="7.60" height="12.50" fill="#d9d9d9" stroke="#7a7a7a" stroke-width="1" />
<line x1="598.30" y1="220.20" x2="598.30" y2="243.00" stroke="#7a7a7a" stroke-width="1" />
<line x1="598.30" y1="243.00" x2="592.40" y2="248.00" stroke="#7a7a7a" stroke-width="1" />
<line x1="598.30" y1="243.00" x2="626.70" y2="243.00" stroke="#7a7a7a" stroke-width="1" />
<polygon points="608.50,224.20 611.10,221.60 611.10,248.40 608.50,251.00" fill="#fff" stroke="#7a7a7a" stroke-width="1" stroke-linejoin="round" />
<polygon points="600.50,224.20 603.10,221.60 611.10,221.60 608.50,224.20" fill="#fff" stroke="#7a7a7a" stroke-width="1" stroke-linejoin="round" />
<rect x="600.50" y="224.20" width="8.00" height="26.80" fill="#fff" stroke="#7a7a7a" stroke-width="1" />
<polygon points="608.50,224.20 611.10,221.60 611.10,241.70 608.50,244.30" fill="#d9d9d9" stroke="#7a7a7a" stroke-width="1" stroke-linejoin="round" />
<polygon points="600.50,224.20 603.10,221.60 611.10,221.60 608.50,224.20" fill="#d9d9d9" stroke="#7a7a7a" stroke-width="1" stroke-linejoin="round" />
<rect x="600.50" y="224.20" width="8.00" height="20.10" fill="#d9d9d9" stroke="#7a7a7a" stroke-width="1" />
<polygon points="622.30,224.20 624.90,221.60 624.90,248.40 622.30,251.00" fill="#fff" stroke="#7a7a7a" stroke-width="1" stroke-linejoin="round" />
<polygon points="614.40,224.20 617.00,221.60 624.90,221.60 622.30,224.20" fill="#fff" stroke="#7a7a7a" stroke-width="1" stroke-linejoin="round" />
<rect x="614.40" y="224.20" width="7.90" height="26.80" fill="#fff" stroke="#7a7a7a" stroke-width="1" />
<polygon points="622.30,224.20 624.90,221.60 624.90,234.10 622.30,236.70" fill="#d9d9d9" stroke="#7a7a7a" stroke-width="1" stroke-linejoin="round" />
<polygon points="614.40,224.20 617.00,221.60 624.90,221.60 622.30,224.20" fill="#d9d9d9" stroke="#7a7a7a" stroke-width="1" stroke-linejoin="round" />
<rect x="614.40" y="224.20" width="7.90" height="12.50" fill="#d9d9d9" stroke="#7a7a7a" stroke-width="1" />
<line x1="656.20" y1="220.20" x2="656.20" y2="243.00" stroke="#7a7a7a" stroke-width="1" />
<line x1="656.20" y1="243.00" x2="652.50" y2="246.30" stroke="#7a7a7a" stroke-width="1" />
<line x1="656.20" y1="243.00" x2="686.30" y2="243.00" stroke="#7a7a7a" stroke-width="1" />
<polygon points="667.70,223.30 670.10,220.90 670.10,244.90 667.70,247.30" fill="#d9d9d9" stroke="#7a7a7a" stroke-width="1" stroke-linejoin="round" />
<polygon points="661.80,223.30 664.20,220.90 670.10,220.90 667.70,223.30" fill="#d9d9d9" stroke="#7a7a7a" stroke-width="1" stroke-linejoin="round" />
<rect x="661.80" y="223.30" width="5.90" height="24.00" fill="#d9d9d9" stroke="#7a7a7a" stroke-width="1" />
<polygon points="683.80,223.30 686.20,220.90 686.20,244.90 683.80,247.30" fill="#d9d9d9" stroke="#7a7a7a" stroke-width="1" stroke-linejoin="round" />
<polygon points="677.90,223.30 680.30,220.90 686.20,220.90 683.80,223.30" fill="#d9d9d9" stroke="#7a7a7a" stroke-width="1" stroke-linejoin="round" />
<rect x="677.90" y="223.30" width="5.90" height="24.00" fill="#d9d9d9" stroke="#7a7a7a" stroke-width="1" />
<polygon points="660.40,235.50 662.60,233.30 662.60,248.80 660.40,251.00" fill="#fff" stroke="#7a7a7a" stroke-width="1" stroke-linejoin="round" />
<polygon points="655.40,235.50 657.60,233.30 662.60,233.30 660.40,235.50" fill="#fff" stroke="#7a7a7a" stroke-width="1" stroke-linejoin="round" />
<rect x="655.40" y="235.50" width="5.00" height="15.50" fill="#fff" stroke="#7a7a7a" stroke-width="1" />
<polygon points="676.70,229.50 678.90,227.30 678.90,248.80 676.70,251.00" fill="#fff" stroke="#7a7a7a" stroke-width="1" stroke-linejoin="round" />
<polygon points="671.40,229.50 673.60,227.30 678.90,227.30 676.70,229.50" fill="#fff" stroke="#7a7a7a" stroke-width="1" stroke-linejoin="round" />
<rect x="671.40" y="229.50" width="5.30" height="21.50" fill="#fff" stroke="#7a7a7a" stroke-width="1" />
<path d="M472.30,305.30 L472.30,336.50 L506.20,336.50" fill="none" stroke="#7a7a7a" stroke-width="1" />
<rect x="472.30" y="307.80" width="17.10" height="5.20" fill="#fff" stroke="#7a7a7a" stroke-width="1" />
<rect x="472.30" y="313.00" width="26.00" height="6.10" fill="#d9d9d9" stroke="#7a7a7a" stroke-width="1" />
<rect x="472.30" y="322.10" width="23.30" height="5.70" fill="#fff" stroke="#7a7a7a" stroke-width="1" />
<rect x="472.30" y="327.80" width="17.10" height="5.90" fill="#d9d9d9" stroke="#7a7a7a" stroke-width="1" />
<path d="M532.30,305.30 L532.30,336.50 L566.40,336.50" fill="none" stroke="#7a7a7a" stroke-width="1" />
<rect x="532.30" y="309.00" width="24.70" height="8.20" fill="#d9d9d9" stroke="#7a7a7a" stroke-width="1" />
<rect x="532.30" y="309.00" width="9.80" height="8.20" fill="#fff" stroke="#7a7a7a" stroke-width="1" />
<rect x="532.30" y="323.80" width="29.60" height="8.20" fill="#d9d9d9" stroke="#7a7a7a" stroke-width="1" />
<rect x="532.30" y="323.80" width="14.80" height="8.20" fill="#fff" stroke="#7a7a7a" stroke-width="1" />
<path d="M592.80,305.30 L592.80,336.50 L626.70,336.50" fill="none" stroke="#7a7a7a" stroke-width="1" />
<rect x="592.80" y="309.00" width="29.70" height="8.20" fill="#d9d9d9" stroke="#7a7a7a" stroke-width="1" />
<rect x="592.80" y="309.00" width="9.40" height="8.20" fill="#fff" stroke="#7a7a7a" stroke-width="1" />
<rect x="592.80" y="323.80" width="29.70" height="8.20" fill="#d9d9d9" stroke="#7a7a7a" stroke-width="1" />
<rect x="592.80" y="323.80" width="14.90" height="8.20" fill="#fff" stroke="#7a7a7a" stroke-width="1" />
<line x1="475.80" y1="388.60" x2="475.80" y2="420.20" stroke="#7a7a7a" stroke-width="1" />
<line x1="475.80" y1="420.20" x2="472.30" y2="424.00" stroke="#7a7a7a" stroke-width="1" />
<line x1="475.80" y1="420.20" x2="506.20" y2="420.20" stroke="#7a7a7a" stroke-width="1" />
<polygon points="473.30,399.20 476.10,396.40 499.10,396.40 496.30,399.20" fill="#d9d9d9" stroke="#7a7a7a" stroke-width="1" stroke-linejoin="round" />
<polygon points="496.30,399.20 499.10,396.40 499.10,401.30 496.30,404.10" fill="#d9d9d9" stroke="#7a7a7a" stroke-width="1" stroke-linejoin="round" />
<rect x="473.30" y="399.20" width="23.00" height="4.90" fill="#d9d9d9" stroke="#7a7a7a" stroke-width="1" />
<polygon points="473.30,394.00 475.80,391.50 490.70,391.50 488.20,394.00" fill="#fff" stroke="#7a7a7a" stroke-width="1" stroke-linejoin="round" />
<polygon points="488.20,394.00 490.70,391.50 490.70,396.50 488.20,399.00" fill="#fff" stroke="#7a7a7a" stroke-width="1" stroke-linejoin="round" />
<rect x="473.30" y="394.00" width="14.90" height="5.00" fill="#fff" stroke="#7a7a7a" stroke-width="1" />
<polygon points="473.30,413.60 475.50,411.40 491.20,411.40 489.00,413.60" fill="#d9d9d9" stroke="#7a7a7a" stroke-width="1" stroke-linejoin="round" />
<polygon points="489.00,413.60 491.20,411.40 491.20,416.00 489.00,418.20" fill="#d9d9d9" stroke="#7a7a7a" stroke-width="1" stroke-linejoin="round" />
<rect x="473.30" y="413.60" width="15.70" height="4.60" fill="#d9d9d9" stroke="#7a7a7a" stroke-width="1" />
<polygon points="473.30,408.30 475.50,406.10 496.60,406.10 494.40,408.30" fill="#fff" stroke="#7a7a7a" stroke-width="1" stroke-linejoin="round" />
<polygon points="494.40,408.30 496.60,406.10 496.60,411.10 494.40,413.30" fill="#fff" stroke="#7a7a7a" stroke-width="1" stroke-linejoin="round" />
<rect x="473.30" y="408.30" width="21.10" height="5.00" fill="#fff" stroke="#7a7a7a" stroke-width="1" />
<line x1="537.70" y1="389.30" x2="537.70" y2="420.20" stroke="#7a7a7a" stroke-width="1" />
<line x1="537.70" y1="420.20" x2="534.70" y2="424.00" stroke="#7a7a7a" stroke-width="1" />
<line x1="537.70" y1="420.20" x2="564.90" y2="420.20" stroke="#7a7a7a" stroke-width="1" />
<polygon points="533.50,396.50 536.70,393.30 556.40,393.30 553.20,396.50" fill="#fff" stroke="#7a7a7a" stroke-width="1" stroke-linejoin="round" />
<polygon points="553.20,396.50 556.40,393.30 556.40,400.20 553.20,403.40" fill="#d9d9d9" stroke="#7a7a7a" stroke-width="1" stroke-linejoin="round" />
<rect x="533.50" y="396.50" width="19.70" height="6.90" fill="#fff" stroke="#7a7a7a" stroke-width="1" />
<polygon points="540.90,396.50 544.10,393.30 556.40,393.30 553.20,396.50" fill="#d9d9d9" stroke="#7a7a7a" stroke-width="1" stroke-linejoin="round" />
<rect x="540.90" y="396.50" width="12.30" height="6.90" fill="#d9d9d9" stroke="#7a7a7a" stroke-width="1" />
<polygon points="533.50,410.30 536.70,407.10 563.40,407.10 560.20,410.30" fill="#fff" stroke="#7a7a7a" stroke-width="1" stroke-linejoin="round" />
<polygon points="560.20,410.30 563.40,407.10 563.40,413.80 560.20,417.00" fill="#d9d9d9" stroke="#7a7a7a" stroke-width="1" stroke-linejoin="round" />
<rect x="533.50" y="410.30" width="26.70" height="6.70" fill="#fff" stroke="#7a7a7a" stroke-width="1" />
<polygon points="547.60,410.30 550.80,407.10 563.40,407.10 560.20,410.30" fill="#d9d9d9" stroke="#7a7a7a" stroke-width="1" stroke-linejoin="round" />
<rect x="547.60" y="410.30" width="12.60" height="6.70" fill="#d9d9d9" stroke="#7a7a7a" stroke-width="1" />
<line x1="598.50" y1="389.30" x2="598.50" y2="420.20" stroke="#7a7a7a" stroke-width="1" />
<line x1="598.50" y1="420.20" x2="595.30" y2="424.00" stroke="#7a7a7a" stroke-width="1" />
<line x1="598.50" y1="420.20" x2="625.00" y2="420.20" stroke="#7a7a7a" stroke-width="1" />
<polygon points="593.60,396.50 596.80,393.30 623.70,393.30 620.50,396.50" fill="#fff" stroke="#7a7a7a" stroke-width="1" stroke-linejoin="round" />
<polygon points="620.50,396.50 623.70,393.30 623.70,400.20 620.50,403.40" fill="#d9d9d9" stroke="#7a7a7a" stroke-width="1" stroke-linejoin="round" />
<rect x="593.60" y="396.50" width="26.90" height="6.90" fill="#fff" stroke="#7a7a7a" stroke-width="1" />
<polygon points="600.80,396.50 604.00,393.30 623.70,393.30 620.50,396.50" fill="#d9d9d9" stroke="#7a7a7a" stroke-width="1" stroke-linejoin="round" />
<rect x="600.80" y="396.50" width="19.70" height="6.90" fill="#d9d9d9" stroke="#7a7a7a" stroke-width="1" />
<polygon points="593.60,410.30 596.80,407.10 623.70,407.10 620.50,410.30" fill="#fff" stroke="#7a7a7a" stroke-width="1" stroke-linejoin="round" />
<polygon points="620.50,410.30 623.70,407.10 623.70,413.80 620.50,417.00" fill="#d9d9d9" stroke="#7a7a7a" stroke-width="1" stroke-linejoin="round" />
<rect x="593.60" y="410.30" width="26.90" height="6.70" fill="#fff" stroke="#7a7a7a" stroke-width="1" />
<polygon points="607.70,410.30 610.90,407.10 623.70,407.10 620.50,410.30" fill="#d9d9d9" stroke="#7a7a7a" stroke-width="1" stroke-linejoin="round" />
<rect x="607.70" y="410.30" width="12.80" height="6.70" fill="#d9d9d9" stroke="#7a7a7a" stroke-width="1" />
<path d="M463.7,443.6 L463.7,457 L478.5,457" fill="none" stroke="#666" stroke-width="1" />
<rect x="466.00" y="449.50" width="2.20" height="7.50" fill="#fff" stroke="#666" stroke-width="0.9" />
<rect x="468.20" y="446.00" width="2.20" height="11.00" fill="#cfcfcf" stroke="#666" stroke-width="0.9" />
<rect x="472.20" y="447.30" width="2.20" height="9.70" fill="#fff" stroke="#666" stroke-width="0.9" />
<rect x="474.40" y="450.50" width="2.20" height="6.50" fill="#cfcfcf" stroke="#666" stroke-width="0.9" />
</svg>
<span id="t70" class="t" style="left:468.54px;top:102.14px;font-size:13.3px;line-height:13.3px;color:#595959;font-weight:700;letter-spacing:-0.149px;">2-D Column</span>
<span id="t71" class="t" style="left:468.69px;top:187.44px;font-size:13.3px;line-height:13.3px;color:#595959;font-weight:700;letter-spacing:-0.166px;">3-D Column</span>
<span id="t72" class="t" style="left:468.54px;top:272.74px;font-size:13.3px;line-height:13.3px;color:#595959;font-weight:700;letter-spacing:0.060px;">2-D Bar</span>
<span id="t73" class="t" style="left:468.69px;top:358.04px;font-size:13.3px;line-height:13.3px;color:#595959;font-weight:700;letter-spacing:0.034px;">3-D Bar</span>
<span id="t74" class="t" style="left:491.91px;top:444.74px;font-size:13.3px;line-height:13.3px;color:#444;font-weight:400;letter-spacing:-0.414px;"><u>M</u>ore Column Charts...</span>
<div style="left:105.2px;top:20px;width:84.8px;height:76.9px;box-sizing:border-box;border:4.2px solid #8a0715;"></div>
<div style="left:3.3px;top:280.8px;width:235.2px;height:135.8px;box-sizing:border-box;border:4.4px solid #8a0715;"></div>
<div style="left:456.8px;top:120.8px;width:64.30000000000001px;height:63.8px;box-sizing:border-box;border:4.2px solid #8a0715;"></div>

</body></html>
